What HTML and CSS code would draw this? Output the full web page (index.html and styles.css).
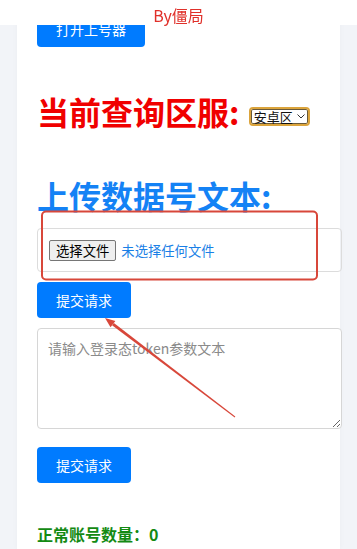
FILE: index.html
```html
<!DOCTYPE html>
<html lang="zh-CN">
<head>
<meta charset="utf-8">
<title>查询</title>
<link rel="stylesheet" href="styles.css">
</head>
<body>
<header class="topbar">By僵局</header>
<main class="card">
  <button class="btn btn-wide">打开上号器</button>
  <h1 class="title title-red">当前查询区服: <span class="select"><span>安卓区</span><svg class="chev" width="8" height="5" viewBox="0 0 8 5"><path d="M0.5 0.5 L4 4 L7.5 0.5" fill="none" stroke="#333" stroke-width="1"/></svg></span></h1>
  <h2 class="title title-blue">上传数据号文本:</h2>
  <div class="filebox"><span class="file-btn">选择文件</span><span class="file-none">未选择任何文件</span></div>
  <button class="btn btn-a">提交请求</button>
  <textarea class="token" placeholder="请输入登录态token参数文本"></textarea>
  <button class="btn btn-b">提交请求</button>
  <p class="count">正常账号数量：0</p>
</main>
<svg class="annot" width="357" height="549" viewBox="0 0 357 549">
  <rect x="42" y="211.5" width="275" height="68" rx="4" ry="4" fill="none" stroke="#d8473a" stroke-width="2"/>
  <polygon points="235.3,416.6 234.7,417.4 112.05,325.25 113.9,322.9" fill="#d8473a"/>
  <polygon points="105,318 115.4,320.9 110.5,327.2" fill="#d8473a"/>
</svg>
</body>
</html>
```
FILE: styles.css
```css
html, body {
  margin: 0;
  padding: 0;
}
body {
  background: #f2f4f8;
  font-family: "Noto Sans CJK SC", "Noto Sans", sans-serif;
  width: 357px;
  height: 549px;
  overflow: hidden;
  position: relative;
}
.topbar {
  position: fixed;
  top: 0;
  left: 0;
  right: 0;
  height: 20px;
  padding-top: 5px;
  line-height: 20px;
  background: #fff;
  color: #e0302a;
  font-size: 16px;
  text-align: center;
  z-index: 5;
}
.card {
  margin: 0 17px;
  background: #fff;
  padding: 11px 20px 3px;
  box-shadow: 0 0 6px rgba(0,0,0,0.03);
}
.btn {
  display: block;
  background: #007bff;
  color: #fff;
  border: none;
  border-radius: 4px;
  height: 36px;
  padding: 0 19px;
  font-family: inherit;
  font-size: 14px;
  line-height: 36px;
}
.title {
  margin: 0;
  font-size: 32px;
  font-weight: bold;
  line-height: 40px;
  white-space: nowrap;
}
.title-red {
  color: #f00000;
  margin-top: 44px;
}
.title-blue {
  color: #1482f5;
  margin-top: 44px;
}
.select {
  display: inline-flex;
  align-items: center;
  gap: 4px;
  height: 15px;
  margin-left: 2px;
  padding: 0 3px;
  border: 2px solid #dba43c;
  border-radius: 4px;
  box-shadow: inset 0 0 0 1px #6a5a3a;
  font-size: 13px;
  font-weight: normal;
  line-height: 15px;
  color: #111;
  vertical-align: 3px;
}
.chev {
  display: block;
}
.filebox {
  margin-top: 13px;
  width: 100%;
  padding: 10px;
  border: 1px solid #dcdcdc;
  border-radius: 4px;
  display: flex;
  align-items: center;
  height: 22px;
}
.file-btn {
  display: inline-block;
  margin-left: 1px;
  border: 1px solid #767676;
  border-radius: 2px;
  background: #efefef;
  padding: 1px 6px;
  font-size: 13.33px;
  line-height: 17px;
  color: #000;
}
.file-none {
  margin-left: 5px;
  font-size: 13.33px;
  color: #1a7fe6;
}
.btn-a {
  margin-top: 10px;
}
.token {
  display: block;
  margin-top: 10px;
  width: 100%;
  height: 79px;
  padding: 10px;
  border: 1px solid #d6d6d6;
  border-radius: 4px;
  font-family: inherit;
  font-size: 14px;
  line-height: 18px;
  resize: vertical;
}
.token::placeholder {
  color: #8a8a8a;
}
.btn-b {
  margin-top: 18px;
}
.count {
  margin: 39px 0 0;
  font-size: 16px;
  font-weight: bold;
  line-height: 24px;
  color: #138a13;
}
.annot {
  position: absolute;
  top: 0;
  left: 0;
  z-index: 4;
  pointer-events: none;
}
```
